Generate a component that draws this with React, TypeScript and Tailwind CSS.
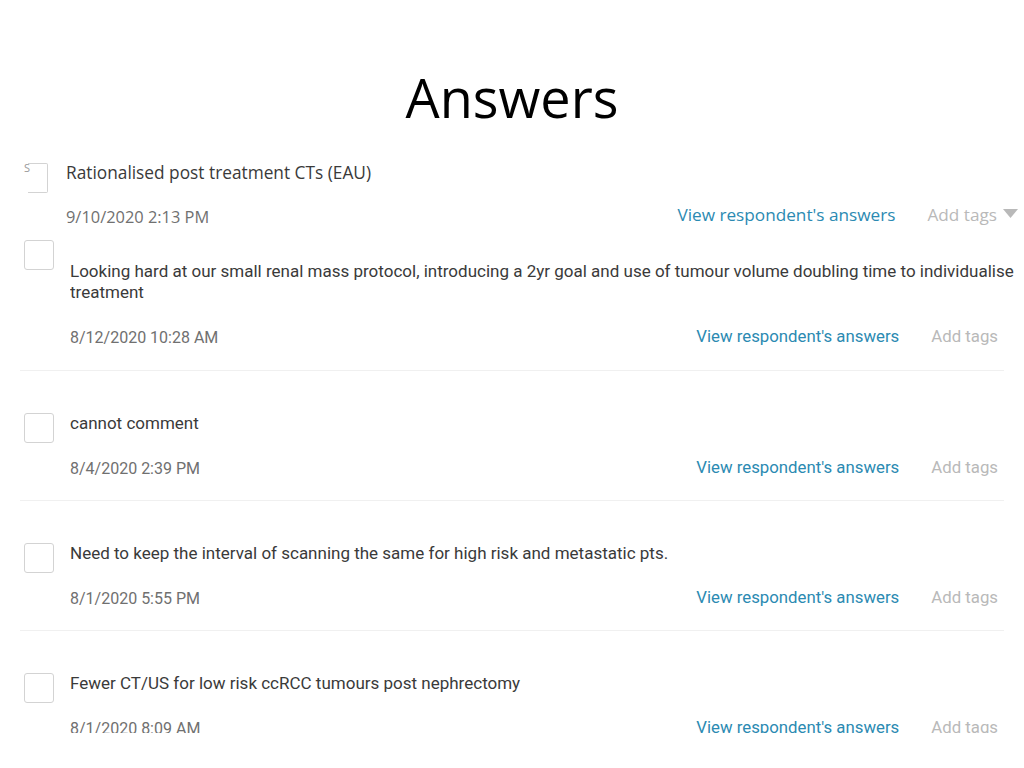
import React from 'react';

type Answer = {
  text: string[];
  date: string;
};

const answers: Answer[] = [
  { text: ['cannot comment'], date: '8/4/2020 2:39 PM' },
  { text: ['Need to keep the interval of scanning the same for high risk and metastatic pts.'], date: '8/1/2020 5:55 PM' },
  { text: ['Fewer CT/US for low risk ccRCC tumours post nephrectomy'], date: '8/1/2020 8:09 AM' },
];

const Checkbox: React.FC<{ className?: string }> = ({ className = '' }) => (
  <div className={`w-[30px] h-[30px] shrink-0 rounded-[3px] border border-[#d3d3d3] bg-white ${className}`} />
);

const Actions: React.FC = () => (
  <div className="flex items-center pr-[6px] -translate-y-[2px] text-[16.8px]">
    <span className="text-[#2b8ab2]">View respondent's answers</span>
    <span className="ml-[32px] text-[#b9b9b9]">Add tags</span>
  </div>
);

const AnswerRow: React.FC<{ answer: Answer }> = ({ answer }) => (
  <div className="border-t border-[#f0f0f0] pt-[41px] pb-[20px]">
    <div className="flex items-start">
      <Checkbox className="ml-[4px] mt-[1px]" />
      <div className="ml-[16px] flex-1 min-w-0">
        <div className="text-[#3a3a3a] text-[17px] leading-[22px] whitespace-nowrap">
          {answer.text.map((l, i) => (
            <div key={i}>{l}</div>
          ))}
        </div>
        <div className="mt-[24px] flex items-center justify-between leading-[22px]">
          <span className="text-[#707070] text-[16px]">{answer.date}</span>
          <Actions />
        </div>
      </div>
    </div>
  </div>
);

export default function App() {
  return (
    <div className="w-[1024px] h-[768px] bg-white overflow-hidden relative">
      <h1
        className="text-center text-black text-[54px] leading-none pt-[70px] h-[150px]"
        style={{ fontFamily: '"Open Sans", sans-serif' }}
      >
        Answers
      </h1>

      <div
        className="h-[583px] overflow-hidden"
        style={{ fontFamily: 'Roboto, "Open Sans", sans-serif' }}
      >
        {/* first, partly cropped entry */}
        <div
          className="relative flex items-start pl-[28px] pt-[12px] pr-[6px]"
          style={{ fontFamily: '"Open Sans", sans-serif' }}
        >
          <span className="absolute left-[24px] top-[10px] text-[11px] text-[#9a9a9a]">S</span>
          <div className="w-[20px] h-[30px] mt-[1px] border-y border-r border-[#d3d3d3] rounded-r-[2px]" />
          <div className="ml-[18px] flex-1">
            <div className="text-[#3a3a3a] text-[17.3px] leading-[22px]">Rationalised post treatment CTs (EAU)</div>
            <div className="mt-[22px] flex items-center justify-between leading-[22px]">
              <span className="text-[#707070] text-[16.4px]">9/10/2020 2:13 PM</span>
              <div className="flex items-center -translate-y-[2px] text-[17.2px]">
                <span className="text-[#2b8ab2]">View respondent's answers</span>
                <span className="ml-[32px] text-[#b9b9b9]">Add tags</span>
                <svg width="15" height="9" viewBox="0 0 15 9" className="ml-[6px] -translate-y-[2px]">
                  <path d="M0 0 H15 L7.5 9 Z" fill="#b9b9b9" />
                </svg>
              </div>
            </div>
          </div>
        </div>

        {/* second entry, two lines */}
        <div className="px-[20px] pt-[12px]">
          <div className="flex items-start">
            <Checkbox className="ml-[4px]" />
            <div className="ml-[16px] flex-1 min-w-0 overflow-hidden -mr-[20px]">
              <div className="text-[#3a3a3a] text-[17px] leading-[21px] whitespace-nowrap mt-[21px]">
                <div>Looking hard at our small renal mass protocol, introducing a 2yr goal and use of tumour volume doubling time to individualise</div>
                <div>treatment</div>
              </div>
              <div className="mt-[24px] flex items-center justify-between leading-[22px] pb-[21px] mr-[20px]">
                <span className="text-[#707070] text-[16px]">8/12/2020 10:28 AM</span>
                <Actions />
              </div>
            </div>
          </div>
        </div>

        <div className="px-[20px]">
          {answers.map((a, i) => (
            <AnswerRow key={i} answer={a} />
          ))}
        </div>
      </div>
    </div>
  );
}
